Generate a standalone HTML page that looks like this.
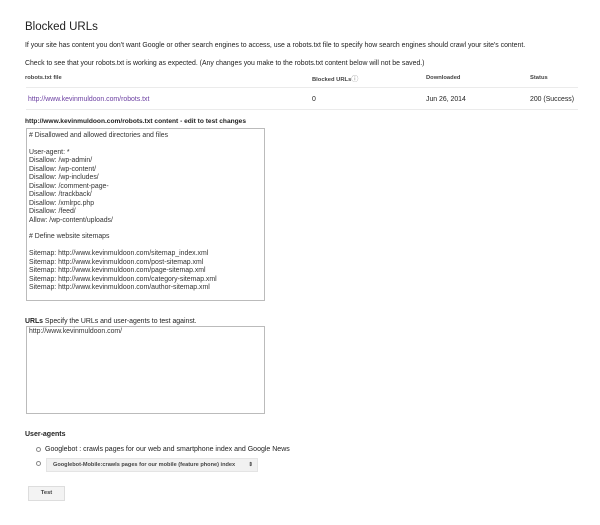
<!DOCTYPE html>
<html><head><style>
body{margin:0;background:#fff;font-family:"Liberation Sans",Arial,sans-serif;color:#222;width:600px;height:525px;overflow:hidden;position:relative}
.a{position:absolute;white-space:nowrap}
.s{font-size:6.9px}
.ta{position:absolute;border:1px solid #bbb;box-sizing:border-box;font-size:6.9px;line-height:8.45px;padding:3px 2px;color:#333;white-space:pre}
.hr{position:absolute;left:26px;width:552px;height:1px;background:#ebebeb}
</style></head><body>
<div class="a" style="left:25px;top:21px;font-size:11.5px;color:#222">Blocked URLs</div>
<div class="a s" style="left:25px;top:42px">If your site has content you don't want Google or other search engines to access, use a robots.txt file to specify how search engines should crawl your site's content.</div>
<div class="a s" style="left:25px;top:60px">Check to see that your robots.txt is working as expected. (Any changes you make to the robots.txt content below will not be saved.)</div>
<div class="a" style="left:25px;top:75px;font-size:5.8px;font-weight:bold;color:#444">robots.txt file</div>
<div class="a" style="left:312px;top:74px;font-size:5.8px;font-weight:bold;color:#444">Blocked URLs<span style="font-weight:normal;font-size:7px;color:#888">ⓘ</span></div>
<div class="a" style="left:426px;top:75px;font-size:5.8px;font-weight:bold;color:#444">Downloaded</div>
<div class="a" style="left:530px;top:75px;font-size:5.8px;font-weight:bold;color:#444">Status</div>
<div class="hr" style="top:87px"></div>
<div class="a s" style="left:28px;top:96px;color:#6a3ea1">http://www.kevinmuldoon.com/robots.txt</div>
<div class="a s" style="left:312px;top:96px">0</div>
<div class="a s" style="left:426px;top:96px">Jun 26, 2014</div>
<div class="a s" style="left:530px;top:96px">200 (Success)</div>
<div class="hr" style="top:109px"></div>
<div class="a" style="left:25px;top:118px;font-size:6.6px;font-weight:bold">http://www.kevinmuldoon.com/robots.txt content - edit to test changes</div>
<div class="ta" style="left:26px;top:128px;width:239px;height:173px"># Disallowed and allowed directories and files

User-agent: *
Disallow: /wp-admin/
Disallow: /wp-content/
Disallow: /wp-includes/
Disallow: /comment-page-
Disallow: /trackback/
Disallow: /xmlrpc.php
Disallow: /feed/
Allow: /wp-content/uploads/

# Define website sitemaps

Sitemap: http://www.kevinmuldoon.com/sitemap_index.xml
Sitemap: http://www.kevinmuldoon.com/post-sitemap.xml
Sitemap: http://www.kevinmuldoon.com/page-sitemap.xml
Sitemap: http://www.kevinmuldoon.com/category-sitemap.xml
Sitemap: http://www.kevinmuldoon.com/author-sitemap.xml</div>
<div class="a s" style="left:25px;top:318px"><b>URLs</b> Specify the URLs and user-agents to test against.</div>
<div class="ta" style="left:26px;top:326px;width:239px;height:88px;padding-top:1px">http://www.kevinmuldoon.com/</div>
<div class="a" style="left:25px;top:431px;font-size:7px;font-weight:bold">User-agents</div>
<div class="a" style="left:36px;top:447px;width:3px;height:3px;border:1px solid #888;border-radius:50%"></div>
<div class="a" style="left:45px;top:446px;font-size:7px">Googlebot : crawls pages for our web and smartphone index and Google News</div>
<div class="a" style="left:36px;top:461px;width:3px;height:3px;border:1px solid #888;border-radius:50%"></div>
<div class="a" style="left:46px;top:458px;width:212px;height:14px;background:#f1f1f1;border:1px solid #e4e4e4;box-sizing:border-box;font-size:5.6px;font-weight:bold;color:#444;line-height:12px;padding-left:6px">Googlebot-Mobile:crawls pages for our mobile (feature phone) index <span style="position:absolute;right:4px">⇕</span></div>
<div class="a" style="left:28px;top:486px;width:37px;height:15px;background:#f3f3f3;border:1px solid #ddd;box-sizing:border-box;font-size:5.8px;font-weight:bold;color:#444;text-align:center;line-height:13px">Test</div>
</body></html>
